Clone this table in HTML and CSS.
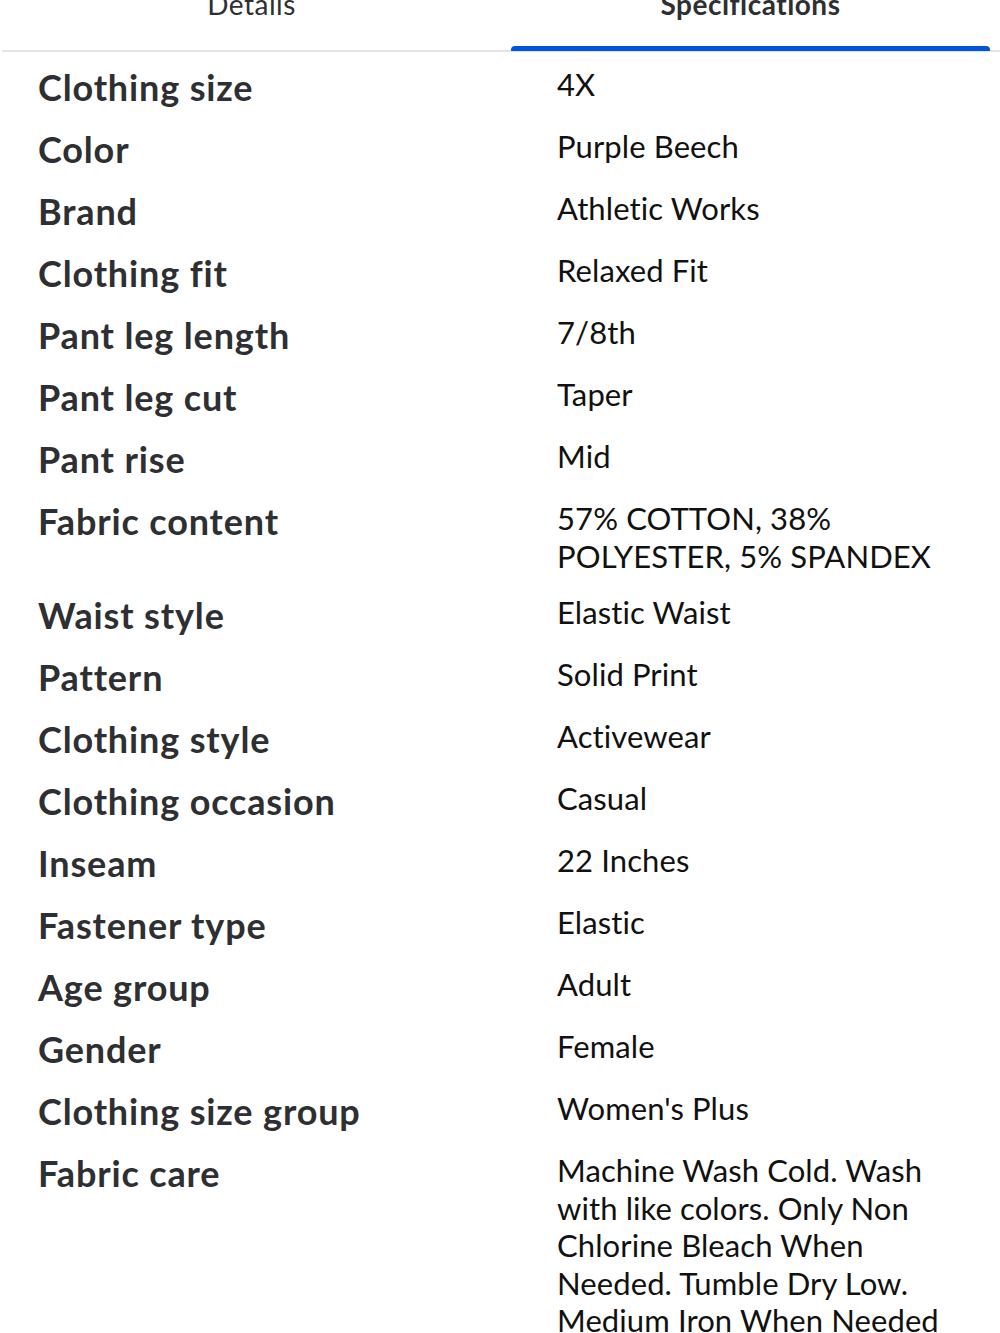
FILE: index.html
```html
<!DOCTYPE html>
<html lang="en">
<head>
<meta charset="utf-8">
<title>Specifications</title>
<link rel="stylesheet" href="styles.css">
</head>
<body>
<div class="page">
  <div class="tabs">
    <div class="tab">Details</div>
    <div class="tab active">Specifications</div>
  </div>
  <div class="specs">
    <div class="row"><div class="label">Clothing size</div><div class="value">4X</div></div>
    <div class="row"><div class="label">Color</div><div class="value">Purple Beech</div></div>
    <div class="row"><div class="label">Brand</div><div class="value">Athletic Works</div></div>
    <div class="row"><div class="label">Clothing fit</div><div class="value">Relaxed Fit</div></div>
    <div class="row"><div class="label">Pant leg length</div><div class="value">7/8th</div></div>
    <div class="row"><div class="label">Pant leg cut</div><div class="value">Taper</div></div>
    <div class="row"><div class="label">Pant rise</div><div class="value">Mid</div></div>
    <div class="row"><div class="label">Fabric content</div><div class="value">57% COTTON, 38% POLYESTER, 5% SPANDEX</div></div>
    <div class="row"><div class="label">Waist style</div><div class="value">Elastic Waist</div></div>
    <div class="row"><div class="label">Pattern</div><div class="value">Solid Print</div></div>
    <div class="row"><div class="label">Clothing style</div><div class="value">Activewear</div></div>
    <div class="row"><div class="label">Clothing occasion</div><div class="value">Casual</div></div>
    <div class="row"><div class="label">Inseam</div><div class="value">22 Inches</div></div>
    <div class="row"><div class="label">Fastener type</div><div class="value">Elastic</div></div>
    <div class="row"><div class="label">Age group</div><div class="value">Adult</div></div>
    <div class="row"><div class="label">Gender</div><div class="value">Female</div></div>
    <div class="row"><div class="label">Clothing size group</div><div class="value">Women's Plus</div></div>
    <div class="row"><div class="label">Fabric care</div><div class="value">Machine Wash Cold. Wash with like colors. Only Non Chlorine Bleach When Needed. Tumble Dry Low. Medium Iron When Needed</div></div>
  </div>
</div>
</body>
</html>
```
FILE: styles.css
```css
html, body {
  margin: 0;
  padding: 0;
  background: #ffffff;
}
body {
  font-family: Lato, "Open Sans", "Liberation Sans", sans-serif;
  color: #2e2f32;
  overflow: hidden;
}
.page {
  width: 1000px;
}
.tabs {
  display: flex;
  margin-top: -16px;
  margin-left: 2px;
  border-bottom: 2px solid #e3e4e5;
}
.tab {
  flex: 1;
  text-align: center;
  font-size: 28px;
  line-height: 40px;
  padding-bottom: 26px;
  color: #2e2f32;
  position: relative;
  letter-spacing: 0.5px;
}
.tab.active {
  font-weight: 700;
}
.tab.active::after {
  content: "";
  position: absolute;
  left: 10px;
  right: 10px;
  bottom: -1px;
  height: 5px;
  background: #0053e2;
  border-radius: 4px 4px 0 0;
}
.specs {
  padding: 0 0 0 38px;
  margin-top: 4px;
}
.row {
  display: flex;
  align-items: flex-start;
  padding: 10px 0 9px;
}
.label {
  width: 519px;
  flex: none;
  font-weight: 700;
  font-size: 36px;
  line-height: 43px;
  color: #2e2f32;
  letter-spacing: 0.85px;
}
.value {
  width: 400px;
  font-size: 31px;
  line-height: 37.5px;
  color: #111111;
  letter-spacing: 0.1px;
}
```
